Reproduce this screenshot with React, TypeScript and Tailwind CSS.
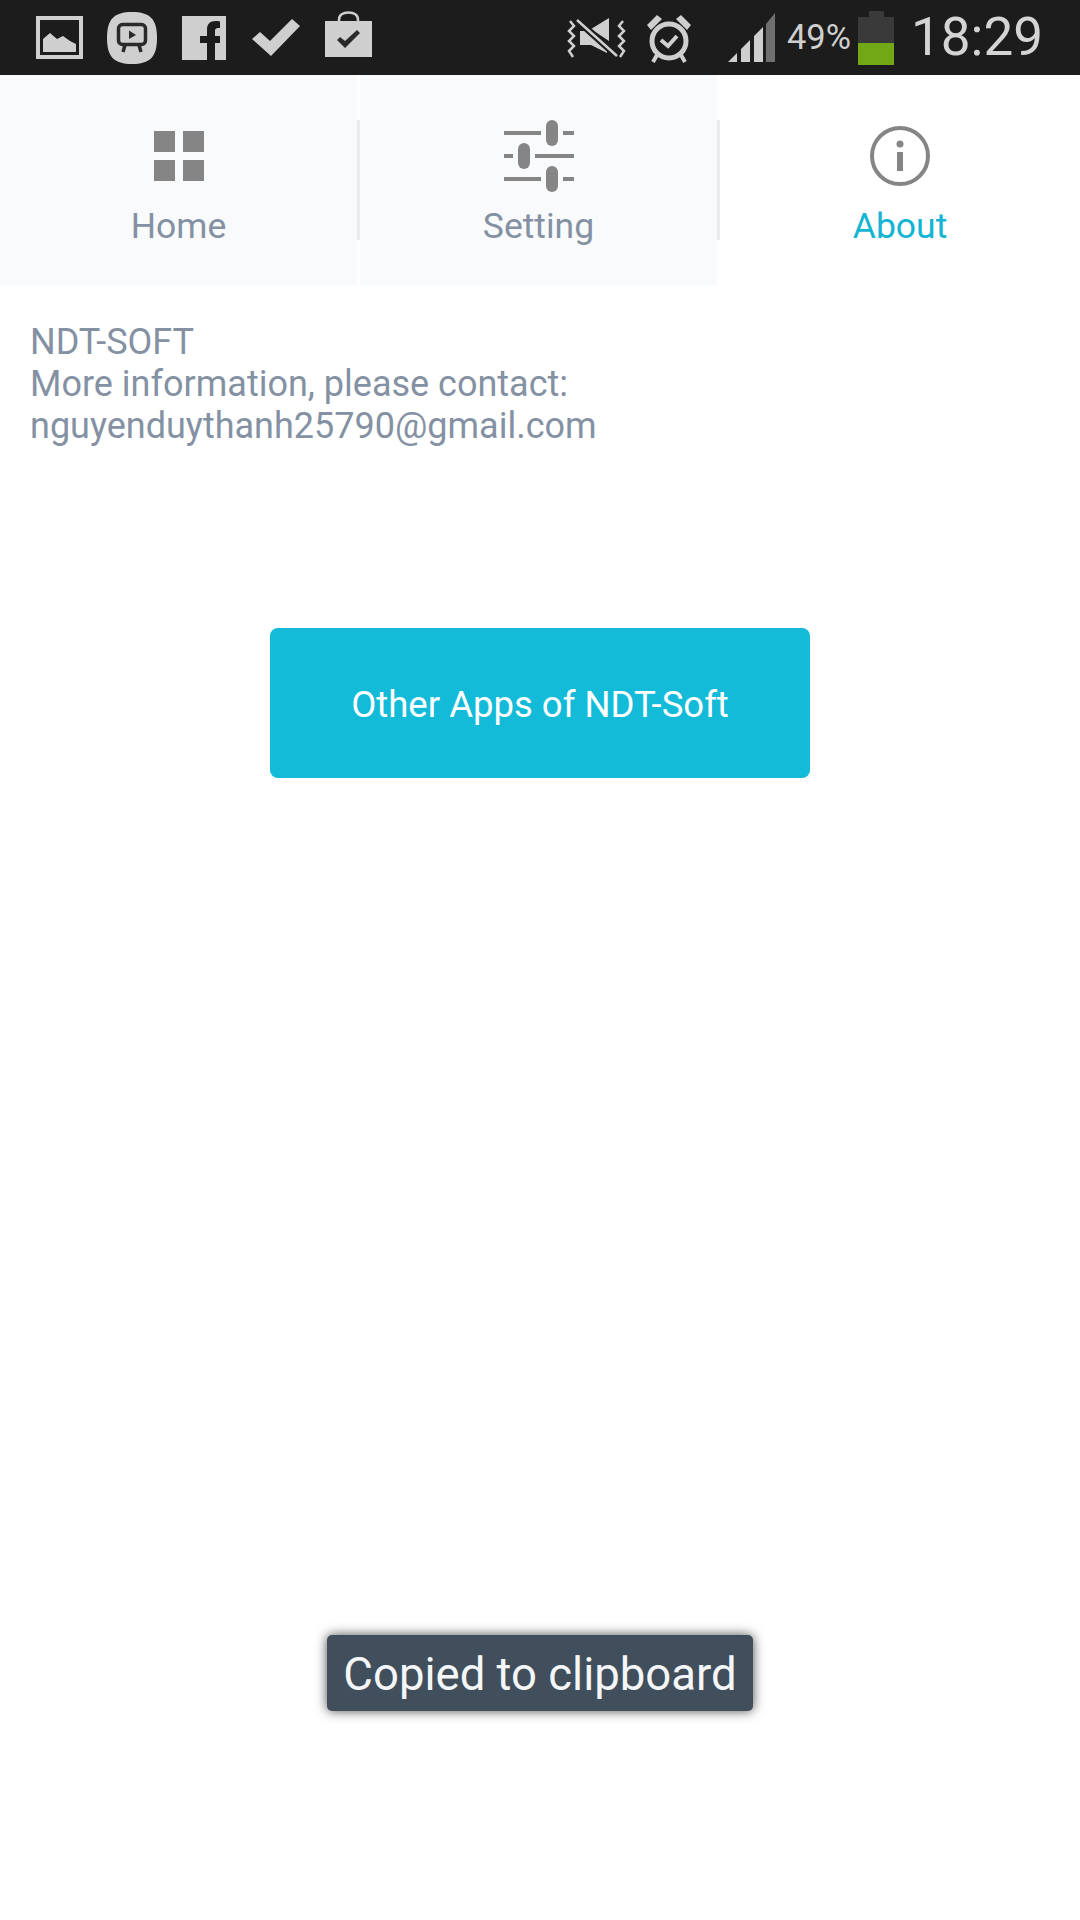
const FONT = "font-['Roboto','Liberation_Sans',sans-serif]";

function ImageIcon() {
  return (
    <svg width="47" height="43" viewBox="0 0 47 43" className="ml-[36px] shrink-0">
      <rect x="2" y="2" width="43" height="39" fill="none" stroke="#cfcfcf" strokeWidth="4" />
      <path d="M7 36V23L14 17L21 23L27 20L34 25L40 28V36Z" fill="#cfcfcf" />
    </svg>
  );
}

function VideoIcon() {
  return (
    <svg width="52" height="54" viewBox="0 0 52 54" className="ml-[23px] shrink-0">
      <path d="M26 1C44 1 51 8 51 27C51 46 44 53 26 53C8 53 1 46 1 27C1 8 8 1 26 1Z" fill="#cfcfcf" />
      <rect x="12.5" y="13.5" width="27" height="20" rx="4" fill="none" stroke="#2a2a2a" strokeWidth="3.5" />
      <path d="M23 19.5L30 24L23 28Z" fill="#2a2a2a" />
      <path d="M19 34L17 41M33 34L35 41" stroke="#2a2a2a" strokeWidth="3.5" />
    </svg>
  );
}

function FacebookIcon() {
  return (
    <svg width="44" height="44" viewBox="0 0 44 44" className="ml-[24px] shrink-0">
      <path
        d="M0 0H44V44H33V27H38V20H33V15C33 12.500 34.500 12 38 12V5.500C29 4 25 7 25 14V20H18V27H25V44H0Z"
        fill="#cfcfcf"
      />
    </svg>
  );
}

function CheckIcon() {
  return (
    <svg width="48" height="38" viewBox="0 0 48 38" className="ml-[26px] shrink-0">
      <path d="M0 20L8 13L18 22L40 0L48 7L19 37Z" fill="#cfcfcf" />
    </svg>
  );
}

function BagIcon() {
  return (
    <svg width="47" height="47" viewBox="0 0 47 47" className="ml-[25px] mb-[6px] shrink-0">
      <path d="M14 11V9C14 4 18 1.500 23.500 1.500C29 1.500 33 4 33 9V11" fill="none" stroke="#cfcfcf" strokeWidth="2.500" />
      <path d="M0 10H47V46H0Z" fill="#cfcfcf" />
      <path d="M12 29L15 26L20 30L32 19L35 22L20 37Z" fill="#2a2a2a" />
    </svg>
  );
}

function MuteIcon() {
  return (
    <svg width="60" height="42" viewBox="0 0 60 42" className="shrink-0">
      <path d="M13 14H18L40 32V36L24 28H13Z M24 12L42 1V24Z" fill="#cfcfcf" />
      <path d="M10 3L50 39" stroke="#1c1c1c" strokeWidth="7" />
      <path d="M10 3L50 39" stroke="#cfcfcf" strokeWidth="2.500" />
      <path
        d="M3 4L7 9L2 14L7 19L2 24L7 29L2 34L6 40M56 4L52 9L57 14L52 19L57 24L52 29L57 34L53 40"
        fill="none"
        stroke="#cfcfcf"
        strokeWidth="2.500"
      />
    </svg>
  );
}

function AlarmIcon() {
  return (
    <svg width="48" height="52" viewBox="0 0 48 52" className="ml-[18px] shrink-0">
      <circle cx="24" cy="29" r="17" fill="none" stroke="#cfcfcf" strokeWidth="5" />
      <path d="M2 13L12 3L17 7L6 18Z M46 13L36 3L31 7L42 18Z" fill="#cfcfcf" />
      <path d="M12 43L8 50M36 43L40 50" stroke="#cfcfcf" strokeWidth="4" />
      <path d="M16 28L23 34L32 24" fill="none" stroke="#cfcfcf" strokeWidth="4" />
    </svg>
  );
}

function SignalIcon() {
  return (
    <svg width="47" height="49" viewBox="0 0 47 49" className="ml-[35px] shrink-0">
      <path d="M0 49L9 40V49Z M13 36L22 27V49H13Z M26 23L35 14V49H26Z" fill="#cfcfcf" />
      <path d="M38 11L47 0V49H38Z" fill="#6f6f6f" />
    </svg>
  );
}

function HomeIcon() {
  return (
    <div className="grid h-[50px] w-[50px] grid-cols-2 gap-[8px]">
      <div className="bg-[#858585]" />
      <div className="bg-[#858585]" />
      <div className="bg-[#858585]" />
      <div className="bg-[#858585]" />
    </div>
  );
}

function SettingIcon() {
  return (
    <svg width="72" height="72" viewBox="0 0 72 72">
      <path
        d="M1 13H38M60 13H71M1 36H10M32 36H71M1 59H38M60 59H71"
        stroke="#858585"
        strokeWidth="4"
        fill="none"
      />
      <rect x="43" y="0" width="12" height="26" rx="6" fill="#858585" />
      <rect x="43" y="46" width="12" height="26" rx="6" fill="#858585" />
      <rect x="15" y="23" width="12" height="26" rx="6" fill="#858585" />
    </svg>
  );
}

function InfoIcon() {
  return (
    <svg width="60" height="62" viewBox="0 0 60 62">
      <circle cx="30" cy="31" r="28" fill="none" stroke="#858585" strokeWidth="4" />
      <circle cx="30" cy="19" r="3.500" fill="#858585" />
      <rect x="27" y="27" width="6" height="19" fill="#858585" />
    </svg>
  );
}

function Tab({
  label,
  icon,
  active,
  width,
}: {
  label: string;
  icon: React.ReactNode;
  active?: boolean;
  width: string;
}) {
  return (
    <div className={`flex h-full flex-col items-center ${width} ${active ? "bg-white" : "bg-[#f8fafc]"}`}>
      <div className="flex h-[129px] items-center justify-center pt-[33px]">{icon}</div>
      <span className={`text-[35.5px] leading-[44px] ${active ? "text-[#14b5d3]" : "text-[#8491a3]"}`}>{label}</span>
    </div>
  );
}

function TabDivider() {
  return (
    <div className="flex h-full w-[3px] items-start pt-[45px]">
      <div className="h-[120px] w-[3px] bg-[#e9ebee]" />
    </div>
  );
}

export default function App() {
  return (
    <div className={`relative h-[1920px] w-[1080px] overflow-hidden bg-white ${FONT}`}>
      <div className="flex h-[75px] items-center bg-[#1c1c1c]">
        <ImageIcon />
        <VideoIcon />
        <FacebookIcon />
        <CheckIcon />
        <BagIcon />
        <div className="flex-1" />
        <MuteIcon />
        <AlarmIcon />
        <SignalIcon />
        <span className="ml-[12px] text-[34.5px] leading-none text-[#cfcfcf]">49%</span>
        <div className="ml-[7px] flex h-[54px] w-[36px] flex-col items-center">
          <div className="h-[6px] w-[15px] bg-[#3a3a3a]" />
          <div className="h-[26px] w-full bg-[#3a3a3a]" />
          <div className="h-[22px] w-full bg-[#72a816]" />
        </div>
        <span className="mr-[37px] ml-[17px] text-[53px] leading-none text-[#d4d4d4]">18:29</span>
      </div>

      <div className="flex h-[210px]">
        <Tab label="Home" icon={<HomeIcon />} width="w-[357px]" />
        <TabDivider />
        <Tab label="Setting" icon={<SettingIcon />} width="w-[357px]" />
        <TabDivider />
        <Tab label="About" icon={<InfoIcon />} width="w-[360px]" active />
      </div>

      <div className="px-[30px] pt-[36px] text-[36px] leading-[42px] text-[#8491a3]">
        <p>NDT-SOFT</p>
        <p>More information, please contact:</p>
        <p>nguyenduythanh25790@gmail.com</p>
      </div>

      <div className="mt-[181px] flex justify-center">
        <button
          type="button"
          className="h-[150px] w-[540px] rounded-[8px] bg-[#14bbd9] pt-[5px] text-[36.5px] text-white"
        >
          Other Apps of NDT-Soft
        </button>
      </div>

      <div className="absolute top-[1635px] left-[327px] flex h-[76px] w-[426px] items-center justify-center rounded-[5px] bg-[#414f5d] pt-[5px] text-[45.5px] text-[#f4f6f8] shadow-[0_0_12px_rgba(0,0,0,0.7)]">
        Copied to clipboard
      </div>
    </div>
  );
}
